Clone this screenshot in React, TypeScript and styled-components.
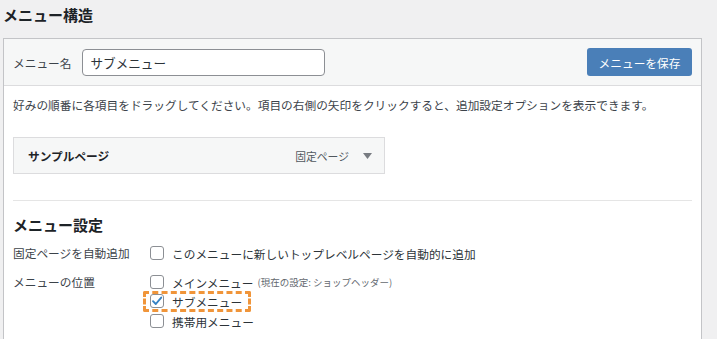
import styled, { createGlobalStyle } from "styled-components";

const GlobalStyle = createGlobalStyle`
  body {
    margin: 0;
    background: #f0f0f1;
    font-family: "Noto Sans CJK JP", "Noto Sans", sans-serif;
    color: #3c434a;
    overflow: hidden;
  }
`;

const Page = styled.div`
  padding: 0 15px 0 3px;
`;

const Title = styled.h2`
  margin: 0 0 8px;
  height: 30px;
  line-height: 30px;
  font-size: 15px;
  font-weight: 700;
  color: #1d2327;
`;

const Panel = styled.div`
  box-sizing: border-box;
  border: 1px solid #c3c4c7;
  border-bottom: none;
  background: #fff;
  height: 301px;
  overflow: hidden;
`;

const PanelHeader = styled.div`
  display: flex;
  align-items: center;
  justify-content: space-between;
  padding: 9px;
  background: #f6f7f7;
  border-bottom: 1px solid #dcdcde;
`;

const NameGroup = styled.label`
  display: flex;
  align-items: center;
  gap: 11px;
  font-size: 11.7px;
  color: #3c434a;
`;

const NameInput = styled.div`
  box-sizing: border-box;
  width: 243px;
  height: 27px;
  padding: 0 7px;
  border: 1px solid #8c8f94;
  border-radius: 4px;
  background: #fff;
  font-size: 12.6px;
  line-height: 25px;
  color: #2c3338;
`;

const SaveButton = styled.button`
  box-sizing: border-box;
  width: 105px;
  height: 28px;
  border: none;
  border-radius: 3px;
  background: #4a7fb8;
  color: #fff;
  font-family: inherit;
  font-size: 11.7px;
  padding: 0;
`;

const PanelBody = styled.div`
  padding: 12px 9px 0 9px;
`;

const Description = styled.p`
  margin: 0;
  font-size: 11.7px;
  line-height: 14px;
  color: #3c434a;
`;

const MenuItem = styled.div`
  box-sizing: border-box;
  display: flex;
  align-items: center;
  width: 372px;
  height: 37px;
  margin-top: 25px;
  padding: 0 12px 0 14px;
  border: 1px solid #dcdcde;
  background: #f6f7f7;
`;

const ItemTitle = styled.span`
  flex: 1;
  font-size: 11.7px;
  font-weight: 600;
  color: #1d2327;
`;

const ItemType = styled.span`
  font-size: 10.8px;
  color: #50575e;
  margin-right: 14px;
`;

const Divider = styled.hr`
  margin: 26px 0 0;
  border: none;
  border-top: 1px solid #e5e5e5;
`;

const SectionTitle = styled.h3`
  margin: 14px 0 9px;
  font-size: 15px;
  line-height: 20px;
  font-weight: 700;
  color: #1d2327;
`;

const SettingRow = styled.div<{ $gap?: number }>`
  display: grid;
  grid-template-columns: 137px 1fr;
  margin-bottom: ${({ $gap }) => $gap ?? 0}px;
`;

const RowLabel = styled.div`
  font-size: 11.7px;
  line-height: 18px;
  color: #3c434a;
`;

const Options = styled.div`
  display: flex;
  flex-direction: column;
`;

const Option = styled.label`
  position: relative;
  display: flex;
  align-items: center;
  gap: 8px;
  height: 20px;
  font-size: 11.7px;
  color: #2c3338;
  align-self: flex-start;
  &:first-child {
    height: 18px;
  }
`;

const Box = styled.span`
  box-sizing: border-box;
  display: flex;
  align-items: center;
  justify-content: center;
  width: 14px;
  height: 14px;
  border: 1px solid #8c8f94;
  border-radius: 3px;
  background: #fff;
`;

const Note = styled.span`
  font-size: 9.5px;
  color: #646970;
  margin-left: -4px;
`;

const Highlight = styled.span`
  position: absolute;
  left: -7px;
  right: -9px;
  top: 0;
  bottom: -1px;
  border: 3px dashed #f0953a;
  border-radius: 2px;
`;

const Checkbox = ({ checked }: { checked?: boolean }) => (
  <Box>
    {checked && (
      <svg width="12" height="12" viewBox="0 0 12 12">
        <path d="M2 6.2 L4.8 9 L10.2 2.6" fill="none" stroke="#3582c4" strokeWidth="1.9" strokeLinecap="round" strokeLinejoin="round" />
      </svg>
    )}
  </Box>
);

const App = () => {
  return (
    <>
      <GlobalStyle />
      <Page>
        <Title>メニュー構造</Title>
        <Panel>
          <PanelHeader>
            <NameGroup>
              メニュー名
              <NameInput>サブメニュー</NameInput>
            </NameGroup>
            <SaveButton>メニューを保存</SaveButton>
          </PanelHeader>
          <PanelBody>
            <Description>
              好みの順番に各項目をドラッグしてください。項目の右側の矢印をクリックすると、追加設定オプションを表示できます。
            </Description>
            <MenuItem>
              <ItemTitle>サンプルページ</ItemTitle>
              <ItemType>固定ページ</ItemType>
              <svg width="9" height="6" viewBox="0 0 9 6">
                <path d="M0 0 H9 L4.5 6 Z" fill="#787c82" />
              </svg>
            </MenuItem>
            <Divider />
            <SectionTitle>メニュー設定</SectionTitle>
            <SettingRow $gap={11}>
              <RowLabel>固定ページを自動追加</RowLabel>
              <Options>
                <Option>
                  <Checkbox />
                  このメニューに新しいトップレベルページを自動的に追加
                </Option>
              </Options>
            </SettingRow>
            <SettingRow>
              <RowLabel>メニューの位置</RowLabel>
              <Options>
                <Option>
                  <Checkbox />
                  メインメニュー
                  <Note>(現在の設定: ショップヘッダー)</Note>
                </Option>
                <Option>
                  <Checkbox checked />
                  サブメニュー
                  <Highlight />
                </Option>
                <Option>
                  <Checkbox />
                  携帯用メニュー
                </Option>
              </Options>
            </SettingRow>
          </PanelBody>
        </Panel>
      </Page>
    </>
  );
};

export default App;
